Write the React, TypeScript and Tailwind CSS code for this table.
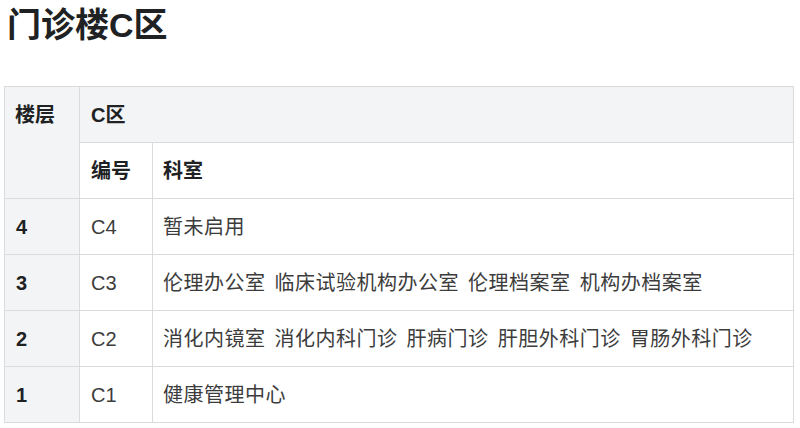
const rows = [
  { floor: '4', code: 'C4', depts: '暂未启用' },
  { floor: '3', code: 'C3', depts: '伦理办公室 临床试验机构办公室 伦理档案室 机构办档案室' },
  { floor: '2', code: 'C2', depts: '消化内镜室 消化内科门诊 肝病门诊 肝胆外科门诊 胃肠外科门诊' },
  { floor: '1', code: 'C1', depts: '健康管理中心' },
];

export default function App() {
  return (
    <div className="w-[800px] h-[428px] bg-white overflow-hidden font-['Liberation_Sans','Noto_Sans_CJK_SC',sans-serif] text-[#202122]">
      <h2 className="mt-[3px] ml-[7px] text-[34px] leading-[44px] font-bold">门诊楼C区</h2>
      <table className="mt-[39px] ml-[4px] w-[790px] table-fixed border-collapse text-[20px] leading-[24px]">
        <colgroup>
          <col className="w-[75px]" />
          <col className="w-[73px]" />
          <col />
        </colgroup>
        <thead>
          <tr>
            <th
              rowSpan={2}
              className="h-[56px] border border-[#dadbdd] bg-[#f3f4f6] px-[10px] pt-[16px] text-left align-top font-bold"
            >
              楼层
            </th>
            <th
              colSpan={2}
              className="h-[56px] border border-[#dadbdd] bg-[#f3f4f6] px-[11px] text-left align-middle font-bold"
            >
              C区
            </th>
          </tr>
          <tr>
            <th className="h-[56px] border border-[#dadbdd] bg-white px-[11px] text-left font-bold">编号</th>
            <th className="h-[56px] border border-[#dadbdd] bg-white px-[10px] text-left font-bold">科室</th>
          </tr>
        </thead>
        <tbody>
          {rows.map((r) => (
            <tr key={r.floor}>
              <th className="h-[56px] border border-[#dadbdd] bg-[#f3f4f6] px-[11px] text-left font-bold">{r.floor}</th>
              <td className="h-[56px] border border-[#dadbdd] px-[11px] text-[#3c3c3c]">{r.code}</td>
              <td className="h-[56px] border border-[#dadbdd] px-[10px] text-[#3c3c3c] tracking-[0.5px] [word-spacing:3px]">
                {r.depts}
              </td>
            </tr>
          ))}
        </tbody>
      </table>
    </div>
  );
}
